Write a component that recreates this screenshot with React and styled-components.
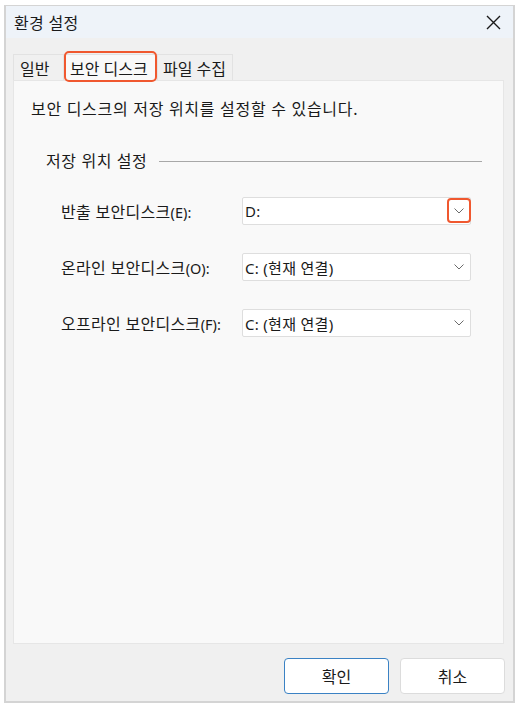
import React from 'react'
import styled, { createGlobalStyle } from 'styled-components'

const GlobalStyle = createGlobalStyle`
	html, body {
		margin: 0;
		padding: 0;
		background: #ffffff;
	}
	body {
		font-family: 'Noto Sans', 'Noto Sans CJK KR', sans-serif;
		color: #1a1a1a;
	}
`

const Page = styled.div`
	width: 520px;
	height: 706px;
	box-sizing: border-box;
	padding: 5px 5px 3px 4px;
`

const Window = styled.div`
	height: 100%;
	box-sizing: border-box;
	border: 1px solid #d4d4d4;
	border-width: 1px 2px 2px 2px;
	background: #f0f0f0;
	display: flex;
	flex-direction: column;
`

const TitleBar = styled.div`
	height: 32px;
	background: #eef3f9;
	display: flex;
	align-items: center;
	justify-content: space-between;
	padding: 0 11px 0 8px;
	font-size: 16px;
	letter-spacing: 0.3px;
	color: #1a1a1a;
`

const CloseButton = styled.div`
	width: 18px;
	height: 18px;
	display: flex;
	align-items: center;
	justify-content: center;
`

const Body = styled.div`
	flex: 1;
	display: flex;
	flex-direction: column;
	padding: 14px 9px 0 7px;
`

const TabStrip = styled.div`
	display: flex;
	height: 28px;
	align-items: flex-end;
`

const Tab = styled.div`
	width: ${p => p.$width}px;
	height: 26px;
	box-sizing: border-box;
	padding-left: ${p => p.$pad || 6}px;
	display: flex;
	align-items: center;
	font-size: 16px;
	position: relative;
	background: ${p => (p.$active ? '#f9f9f9' : '#f0f0f0')};
	border: 1px solid #e2e2e2;
	border-bottom: none;
	margin-right: -1px;

	${p =>
		p.$marked &&
		`
		&::after {
			content: '';
			position: absolute;
			left: 0;
			right: 0;
			top: -4px;
			bottom: -2px;
			border: 2px solid #f0582f;
			border-radius: 5px;
		}
	`}
`

const TabPanel = styled.div`
	flex: 1;
	background: #f9f9f9;
	border: 1px solid #e6e6e6;
	padding: 18px 0 0 17px;
	box-sizing: border-box;
	margin-bottom: 14px;
`

const Intro = styled.p`
	margin: 0;
	font-size: 16px;
	letter-spacing: 0.7px;
	line-height: 20px;
`

const Group = styled.div`
	margin: 32px 21px 0 15px;
`

const GroupTitle = styled.div`
	display: flex;
	align-items: center;
	gap: 12px;
	font-size: 16px;
	letter-spacing: 0.6px;
	line-height: 20px;

	&::after {
		content: '';
		flex: 1;
		height: 1px;
		background: #a8a8a8;
	}
`

const Rows = styled.div`
	display: flex;
	flex-direction: column;
	gap: 28px;
	margin: 26px 0 0 15px;
`

const Row = styled.div`
	display: grid;
	grid-template-columns: 181px 229px;
	align-items: center;
`

const Label = styled.span`
	font-size: 16px;
	letter-spacing: 0.3px;

	small {
		font-size: 14.5px;
		letter-spacing: 0;
	}
`

const Select = styled.div`
	height: 28px;
	box-sizing: border-box;
	background: #ffffff;
	border: 1px solid #dedede;
	border-radius: 2px;
	display: flex;
	align-items: center;
	justify-content: space-between;
	padding: 0 0 0 2px;
	font-size: 15px;
	letter-spacing: 0.3px;
	position: relative;
`

const Chevron = styled.div`
	width: 22px;
	height: 26px;
	display: flex;
	align-items: center;
	justify-content: center;
	position: relative;

	${p =>
		p.$marked &&
		`
		&::after {
			content: '';
			position: absolute;
			inset: 0 -1px 1px -1px;
			border: 2px solid #f0582f;
			border-radius: 4px;
		}
	`}
`

const Footer = styled.div`
	display: flex;
	justify-content: flex-end;
	gap: 11px;
	padding: 0 8px 7px 0;
`

const Button = styled.button`
	width: 105px;
	height: 36px;
	border-radius: 4px;
	background: #ffffff;
	border: 1px solid ${p => (p.$primary ? '#3b82c4' : '#dcdcdc')};
	font-family: 'Noto Sans', 'Noto Sans CJK KR', sans-serif;
	font-size: 16px;
	color: #1a1a1a;
`

const ChevronIcon = () => (
	<svg width="10" height="6" viewBox="0 0 10 6">
		<path d="M0.5 0.5 L5 5 L9.5 0.5" fill="none" stroke="#6b6b6b" strokeWidth="1" />
	</svg>
)

const rows = [
	{ label: '반출 보안디스크', key: 'E', value: 'D:', marked: true },
	{ label: '온라인 보안디스크', key: 'O', value: 'C: (현재 연결)' },
	{ label: '오프라인 보안디스크', key: 'F', value: 'C: (현재 연결)' },
]

const App = () => {
	return (
		<>
			<GlobalStyle />
			<Page>
				<Window>
					<TitleBar>
						<span>환경 설정</span>
						<CloseButton>
							<svg width="15" height="15" viewBox="0 0 15 15">
								<path d="M1 1 L14 14 M14 1 L1 14" stroke="#1a1a1a" strokeWidth="1.4" />
							</svg>
						</CloseButton>
					</TitleBar>
					<Body>
						<TabStrip>
							<Tab $width={51} $pad={6}>일반</Tab>
							<Tab $width={95} $active $marked $pad={6}>보안 디스크</Tab>
							<Tab $width={76} $pad={5}>파일 수집</Tab>
						</TabStrip>
						<TabPanel>
							<Intro>보안 디스크의 저장 위치를 설정할 수 있습니다.</Intro>
							<Group>
								<GroupTitle>저장 위치 설정</GroupTitle>
								<Rows>
									{rows.map(row => (
										<Row key={row.key}>
											<Label>
												{row.label}
												<small>({row.key}):</small>
											</Label>
											<Select>
												<span>{row.value}</span>
												<Chevron $marked={row.marked}>
													<ChevronIcon />
												</Chevron>
											</Select>
										</Row>
									))}
								</Rows>
							</Group>
						</TabPanel>
					</Body>
					<Footer>
						<Button $primary>확인</Button>
						<Button>취소</Button>
					</Footer>
				</Window>
			</Page>
		</>
	)
}

export default App
